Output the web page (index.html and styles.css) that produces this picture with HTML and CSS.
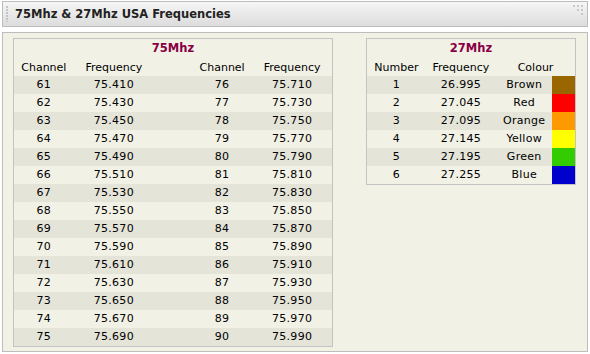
FILE: index.html
```html
<!DOCTYPE html>
<html>
<head>
<meta charset="utf-8">
<link rel="stylesheet" href="styles.css">
</head>
<body>
<div class="panel">
  <div class="header">
    <span class="grip-left"></span>
    <h1 class="title">75Mhz &amp; 27Mhz USA Frequencies</h1>
    <svg class="grip-right" width="12" height="12" viewBox="0 0 12 12">
      <rect x="1" y="1" width="2" height="2" fill="#c8c8c8"/>
      <rect x="5" y="1" width="2" height="2" fill="#c8c8c8"/>
      <rect x="9" y="1" width="2" height="2" fill="#c8c8c8"/>
      <rect x="5" y="5" width="2" height="2" fill="#c8c8c8"/>
      <rect x="9" y="5" width="2" height="2" fill="#c8c8c8"/>
      <rect x="9" y="9" width="2" height="2" fill="#c8c8c8"/>
    </svg>
  </div>
  <div class="content">
    <table class="freq t75">
      <colgroup><col class="c60"><col class="c80"><col class="c38"><col class="c60"><col class="c80"></colgroup>
      <tr class="caprow"><th class="cap" colspan="5">75Mhz</th></tr>
      <tr class="head"><td>Channel</td><td>Frequency</td><td></td><td>Channel</td><td>Frequency</td></tr>
      <tr class="odd"><td>61</td><td>75.410</td><td></td><td>76</td><td>75.710</td></tr>
      <tr><td>62</td><td>75.430</td><td></td><td>77</td><td>75.730</td></tr>
      <tr class="odd"><td>63</td><td>75.450</td><td></td><td>78</td><td>75.750</td></tr>
      <tr><td>64</td><td>75.470</td><td></td><td>79</td><td>75.770</td></tr>
      <tr class="odd"><td>65</td><td>75.490</td><td></td><td>80</td><td>75.790</td></tr>
      <tr><td>66</td><td>75.510</td><td></td><td>81</td><td>75.810</td></tr>
      <tr class="odd"><td>67</td><td>75.530</td><td></td><td>82</td><td>75.830</td></tr>
      <tr><td>68</td><td>75.550</td><td></td><td>83</td><td>75.850</td></tr>
      <tr class="odd"><td>69</td><td>75.570</td><td></td><td>84</td><td>75.870</td></tr>
      <tr><td>70</td><td>75.590</td><td></td><td>85</td><td>75.890</td></tr>
      <tr class="odd"><td>71</td><td>75.610</td><td></td><td>86</td><td>75.910</td></tr>
      <tr><td>72</td><td>75.630</td><td></td><td>87</td><td>75.930</td></tr>
      <tr class="odd"><td>73</td><td>75.650</td><td></td><td>88</td><td>75.950</td></tr>
      <tr><td>74</td><td>75.670</td><td></td><td>89</td><td>75.970</td></tr>
      <tr class="odd"><td>75</td><td>75.690</td><td></td><td>90</td><td>75.990</td></tr>
    </table>
    <table class="freq t27">
      <colgroup><col class="c59"><col class="c70"><col class="c56"><col class="c23"></colgroup>
      <tr class="caprow"><th class="cap" colspan="4">27Mhz</th></tr>
      <tr class="head"><td>Number</td><td>Frequency</td><td colspan="2">Colour</td></tr>
      <tr class="odd"><td>1</td><td>26.995</td><td>Brown</td><td class="sw brown"></td></tr>
      <tr><td>2</td><td>27.045</td><td>Red</td><td class="sw red"></td></tr>
      <tr class="odd"><td>3</td><td>27.095</td><td>Orange</td><td class="sw orange"></td></tr>
      <tr><td>4</td><td>27.145</td><td>Yellow</td><td class="sw yellow"></td></tr>
      <tr class="odd"><td>5</td><td>27.195</td><td>Green</td><td class="sw green"></td></tr>
      <tr><td>6</td><td>27.255</td><td>Blue</td><td class="sw blue"></td></tr>
    </table>
  </div>
</div>
</body>
</html>
```

FILE: styles.css
```css
html, body {
  margin: 0;
  padding: 0;
  background: #ffffff;
}
body {
  font-family: "DejaVu Sans", Verdana, sans-serif;
  font-size: 11px;
  color: #000;
}
.panel {
  padding: 1px 2px 2px 2px;
  width: 586px;
}
.header {
  height: 24px;
  border: 1px solid #bcbcbc;
  background: linear-gradient(#f6f6f6, #dcdcdc);
  display: flex;
  align-items: center;
  position: relative;
}
.grip-left {
  width: 2px;
  height: 16px;
  margin-left: 3px;
  background: repeating-linear-gradient(#c4c4c4 0 2px, transparent 2px 3px);
}
.title {
  margin: 0 0 0 7px;
  font-size: 11.5px;
  font-weight: bold;
  color: #222;
  flex: 1;
  line-height: 25px;
}
.grip-right {
  position: absolute;
  right: 3px;
  top: 2px;
}
.content {
  margin-top: 5px;
  height: 308px;
  border: 1px solid #bdbdbd;
  background: #f1f1e6;
  padding: 5px 10px;
  display: flex;
  align-items: flex-start;
  gap: 33px;
}
.freq {
  border-collapse: collapse;
  table-layout: fixed;
  border: 1px solid #c3c3c3;
}
.t75 { width: 320px; }
.t27 { width: 210px; }
.c60 { width: 60px; }
.c80 { width: 80px; }
.c38 { width: 38px; }
.c59 { width: 59px; }
.c70 { width: 70px; }
.c56 { width: 56px; }
.c23 { width: 23px; }
.freq td, .freq th {
  height: 18px;
  padding: 0;
  text-align: center;
  line-height: 18px;
  white-space: nowrap;
}
.freq .caprow th {
  height: 19px;
  line-height: 17px;
}
.freq .head td {
  line-height: 17px;
}
.freq td {
  letter-spacing: 0.3px;
}
.freq .head td {
  letter-spacing: 0;
}
.cap {
  font-size: 11.5px;
  font-weight: bold;
  color: #880044;
}
.odd {
  background: #e4e4d8;
}
.sw { padding: 0; }
.brown { background: #996600; }
.red { background: #ff0000; }
.orange { background: #ff9900; }
.yellow { background: #ffff00; }
.green { background: #33cc00; }
.blue { background: #0000cc; }
```
